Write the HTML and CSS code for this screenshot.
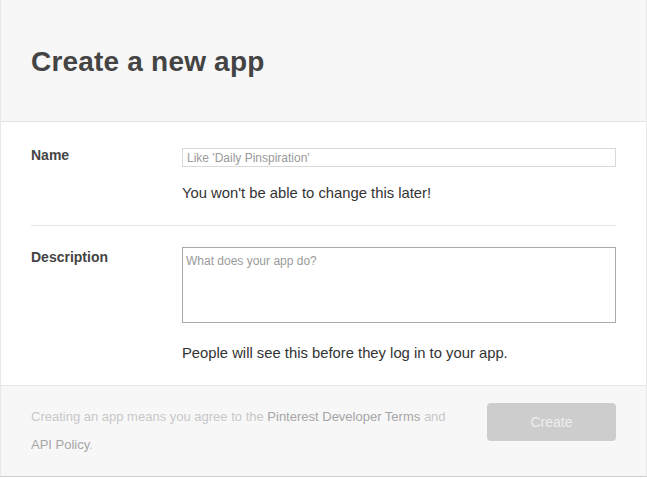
FILE: index.html
```html
<!DOCTYPE html>
<html lang="en">
<head>
<meta charset="utf-8">
<title>Create a new app</title>
<link rel="stylesheet" href="styles.css">
</head>
<body>
<div class="modal">
  <header class="modal-header">
    <h1 class="title">Create a new app</h1>
  </header>
  <div class="modal-body">
    <div class="field field-name">
      <label class="label">Name</label>
      <div class="control">
        <div class="input"><span class="placeholder">Like 'Daily Pinspiration'</span></div>
        <p class="hint hint-name">You won't be able to change this later!</p>
      </div>
    </div>
    <div class="divider"></div>
    <div class="field field-desc">
      <label class="label">Description</label>
      <div class="control">
        <div class="textarea"><span class="placeholder">What does your app do?</span></div>
        <p class="hint hint-desc">People will see this before they log in to your app.</p>
      </div>
    </div>
  </div>
  <footer class="modal-footer">
    <p class="terms">Creating an app means you agree to the <a class="link">Pinterest Developer Terms</a> and <a class="link">API Policy</a>.</p>
    <button class="btn-create" type="button">Create</button>
  </footer>
</div>
</body>
</html>
```

FILE: styles.css
```css
* { box-sizing: border-box; }
html, body { margin: 0; padding: 0; }
body {
  background: #ffffff;
  font-family: "Liberation Sans", Arial, Helvetica, sans-serif;
  color: #333333;
  height: 479px;
  overflow: hidden;
}
.modal {
  border-left: 1px solid #e8e8e8;
  border-right: 1px solid #e8e8e8;
  border-bottom: 1px solid #cfcfcf;
}
.modal-header {
  height: 122px;
  background: #f7f7f8;
  border-bottom: 1px solid #e3e3e3;
  padding-left: 30px;
  padding-top: 3px;
  display: flex;
  align-items: center;
}
.title {
  margin: 0;
  font-size: 28px;
  font-weight: bold;
  color: #444444;
  letter-spacing: 0.2px;
}
.modal-body {
  padding: 0 30px 0 30px;
}
.field {
  display: grid;
  grid-template-columns: 151px 1fr;
}
.field-name { padding-top: 26px; }
.field-desc { padding-top: 21px; }
.label {
  font-size: 14px;
  font-weight: bold;
  color: #444444;
  line-height: 15px;
}
.field-desc .label { padding-top: 3px; }
.input {
  height: 19px;
  border: 1px solid #d9d9d9;
  padding: 0 4px;
  display: flex;
  align-items: center;
}
.textarea {
  height: 76px;
  border: 1px solid #a9a9a9;
  padding: 3px 3px;
}
.placeholder {
  font-size: 12px;
  color: #9a9a9a;
  line-height: 14px;
}
.hint {
  margin: 0;
  font-size: 14.8px;
  line-height: 18px;
  color: #333333;
}
.hint-name { margin-top: 17px; }
.hint-desc { margin-top: 21px; }
.divider {
  height: 1px;
  background: #e6e6e6;
  margin-top: 23px;
}
.modal-footer {
  margin-top: 23px;
  height: 91px;
  background: #f7f7f8;
  border-top: 1px solid #e6e6e6;
  display: flex;
  align-items: flex-start;
  justify-content: space-between;
  padding: 0 30px 0 30px;
}
.terms {
  margin: 17px 0 0 0;
  width: 430px;
  font-size: 13px;
  line-height: 28px;
  color: #c8c8c8;
}
.link {
  color: #a6a6a6;
  text-decoration: none;
}
.btn-create {
  margin-top: 17px;
  width: 129px;
  height: 38px;
  border: none;
  border-radius: 4px;
  background: #cdcdcd;
  color: #eeeeee;
  font-family: "Liberation Sans", Arial, Helvetica, sans-serif;
  font-size: 14px;
}
```
